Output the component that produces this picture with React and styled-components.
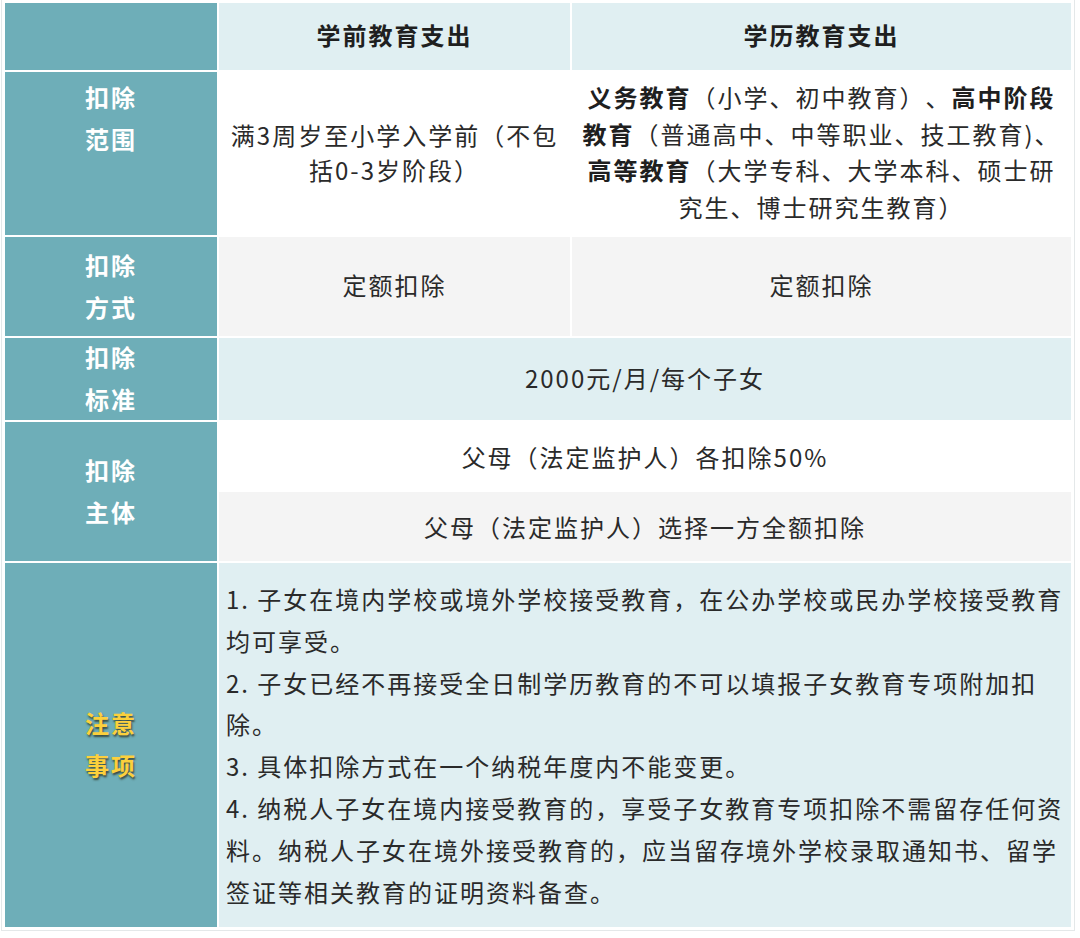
import React from "react";
import styled, { createGlobalStyle } from "styled-components";

const GlobalStyle = createGlobalStyle`
  body {
    margin: 0;
    background: #ffffff;
    font-family: "Noto Sans CJK SC", "Noto Sans", sans-serif;
  }
`;

const tones = {
  head: "#e0eff2",
  white: "#ffffff",
  gray: "#f4f4f4",
  cyan: "#e0eff2",
};

const Frame = styled.div`
  width: 1066px;
  margin-left: 1px;
  padding: 3px 3px 3px 3px;
  border: 1px solid #e4e8e9;
  border-top: none;
`;

const Table = styled.div`
  display: grid;
  grid-template-columns: 212px 351px 499px;
  grid-template-rows: 67px 163px 99px 82px 139px 364px;
  gap: 2px;
  background: #ffffff;
  font-size: 24px;
  letter-spacing: 2px;
  text-spacing-trim: space-all;
  color: #2a2a2a;
`;

const Label = styled.div`
  display: flex;
  flex-direction: column;
  align-items: center;
  justify-content: ${(p) => (p.$top ? "flex-start" : "center")};
  padding-top: ${(p) => (p.$top ? "4px" : "0")};
  padding-bottom: ${(p) => (p.$top ? "0" : "2px")};
  background: #6eaeb8;
  color: ${(p) => (p.$warn ? "#fcd03c" : "#ffffff")};
  text-shadow: ${(p) => (p.$warn ? "1px 2px 2px rgba(40, 40, 20, 0.75)" : "none")};
  font-weight: 700;
  line-height: 42px;
`;

const Corner = styled.div`
  background: #6eaeb8;
`;

const Cell = styled.div`
  display: flex;
  align-items: center;
  justify-content: center;
  text-align: center;
  padding: 0 7px 3px;
  line-height: ${(p) => p.$lh || "36px"};
  background: ${(p) => tones[p.$tone]};
  grid-column: ${(p) => (p.$span ? "span 2" : "auto")};
  font-weight: ${(p) => (p.$tone === "head" ? 700 : 400)};
  color: ${(p) => (p.$tone === "head" ? "#1f1f1f" : "#2a2a2a")};
`;

const Split = styled.div`
  grid-column: span 2;
  display: flex;
  flex-direction: column;
`;

const SubRow = styled.div`
  flex: 1;
  display: flex;
  align-items: center;
  justify-content: center;
  background: ${(p) => tones[p.$tone]};
`;

const Notes = styled.div`
  grid-column: span 2;
  background: #e0eff2;
  padding: 15px 3px 0 7px;
  line-height: 41.8px;
`;

const Note = styled.p`
  margin: 0;
`;

const B = styled.b`
  font-weight: 700;
  color: #1f1f1f;
`;

export default function App() {
  return (
    <>
      <GlobalStyle />
      <Frame>
        <Table>
          <Corner />
          <Cell $tone="head">学前教育支出</Cell>
          <Cell $tone="head">学历教育支出</Cell>

          <Label $top>
            <span>扣除</span>
            <span>范围</span>
          </Label>
          <Cell $tone="white" $lh="35px">满3周岁至小学入学前（不包括0-3岁阶段）</Cell>
          <Cell $tone="white" $lh="36.5px">
            <span>
              <B>义务教育</B>（小学、初中教育）、<B>高中阶段教育</B>（普通高中、中等职业、技工教育)、<B>高等教育</B>（大学专科、大学本科、硕士研究生、博士研究生教育）
            </span>
          </Cell>

          <Label>
            <span>扣除</span>
            <span>方式</span>
          </Label>
          <Cell $tone="gray">定额扣除</Cell>
          <Cell $tone="gray">定额扣除</Cell>

          <Label>
            <span>扣除</span>
            <span>标准</span>
          </Label>
          <Cell $tone="cyan" $span>2000元/月/每个子女</Cell>

          <Label>
            <span>扣除</span>
            <span>主体</span>
          </Label>
          <Split>
            <SubRow $tone="white">父母（法定监护人）各扣除50%</SubRow>
            <SubRow $tone="gray">父母（法定监护人）选择一方全额扣除</SubRow>
          </Split>

          <Label $warn>
            <span>注意</span>
            <span>事项</span>
          </Label>
          <Notes>
            <Note>1. 子女在境内学校或境外学校接受教育，在公办学校或民办学校接受教育均可享受。</Note>
            <Note>2. 子女已经不再接受全日制学历教育的不可以填报子女教育专项附加扣除。</Note>
            <Note>3. 具体扣除方式在一个纳税年度内不能变更。</Note>
            <Note>4. 纳税人子女在境内接受教育的，享受子女教育专项扣除不需留存任何资料。纳税人子女在境外接受教育的，应当留存境外学校录取通知书、留学签证等相关教育的证明资料备查。</Note>
          </Notes>
        </Table>
      </Frame>
    </>
  );
}
